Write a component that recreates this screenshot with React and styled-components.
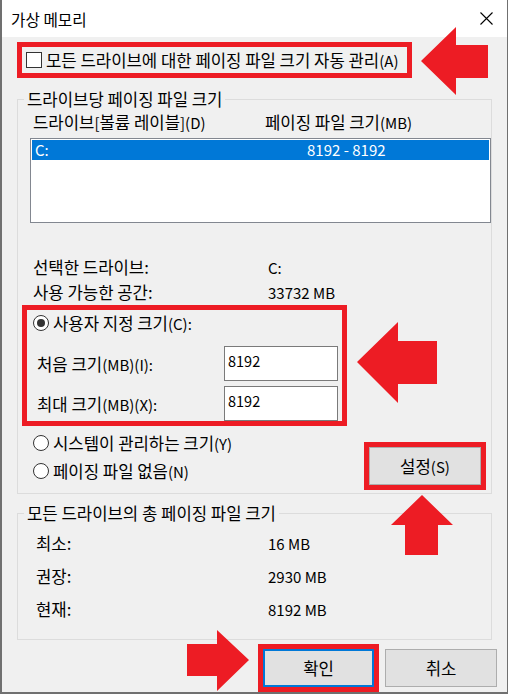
import React from "react";
import styled, { createGlobalStyle } from "styled-components";

const GlobalStyle = createGlobalStyle`
  html, body { margin: 0; padding: 0; background: #ffffff; }
  body {
    font-family: "Noto Sans CJK KR", "Noto Sans", sans-serif;
    font-size: 16.7px;
    color: #000;
  }
  * { box-sizing: border-box; }
`;

const RED = "#ed1c24";

const Window = styled.div`
  position: relative;
  width: 508px;
  height: 694px;
  background: #f0f0f0;
  border-left: 2px solid #707070;
  border-right: 1px solid #707070;
  border-bottom: 2px solid #707070;
  display: flex;
  flex-direction: column;
  overflow: hidden;
`;

const TitleBar = styled.div`
  height: 37px;
  flex: none;
  background: #fff;
  display: flex;
  align-items: center;
  justify-content: space-between;
  padding: 0 14px 0 9px;
`;

const Title = styled.span`
  font-size: 15.7px;
  line-height: 20px;
  margin-top: 2px;
`;

const CloseIcon = styled.svg`
  width: 13px;
  height: 13px;
  display: block;
`;

/* Latin / digit runs: Malgun Gothic draws these smaller than Hangul */
const Alt = styled.span`
  font-size: 15px;
`;

const Highlight = styled.div`
  border: 5px solid ${RED};
  flex: none;
`;

const AutoManage = styled(Highlight)`
  margin: 5px 0 0 15px;
  width: 395px;
  height: 36px;
  display: flex;
  align-items: center;
  gap: 4px;
  padding-left: 4px;
  line-height: 20px;
  white-space: nowrap;
`;

const Checkbox = styled.span`
  width: 16px;
  height: 16px;
  flex: none;
  background: #fff;
  border: 1px solid #333;
`;

const Group = styled.fieldset`
  margin: ${(p) => p.$mt}px 15px 0 15px;
  padding: 5px 0 ${(p) => p.$pb}px 0;
  border: 1px solid #dcdcdc;
  min-width: 0;
  flex: none;
`;

const Legend = styled.legend`
  margin-left: 6px;
  padding: 0 3px;
  line-height: 18px;
`;

const ColumnHeader = styled.div`
  display: grid;
  grid-template-columns: 232px 1fr;
  padding-left: 15px;
  height: 20px;
  line-height: 18px;
  white-space: nowrap;
`;

const ListBox = styled.div`
  margin: 5px 0 0 12px;
  height: 85px;
  background: #fff;
  border: 1px solid #828790;
  padding: 1px;
`;

const ListRow = styled.div`
  display: grid;
  grid-template-columns: 272px 1fr;
  height: 20px;
  line-height: 20px;
  padding-left: 3px;
  font-size: 15px;
  background: ${(p) => (p.$selected ? "#0078d7" : "transparent")};
  color: ${(p) => (p.$selected ? "#fff" : "#000")};
`;

const InfoList = styled.div`
  margin-top: 32px;
`;

const InfoRow = styled.div`
  display: grid;
  grid-template-columns: 235px 1fr;
  padding-left: 15px;
  height: 25px;
  line-height: 25px;
`;

const Value = styled.span`
  font-size: 15px;
`;

const CustomSize = styled(Highlight)`
  margin-left: 4px;
  width: 325px;
  height: 121px;
  display: flex;
  flex-direction: column;
`;

const RadioOption = styled.div`
  display: flex;
  align-items: center;
  gap: 4px;
  height: ${(p) => p.$h}px;
  padding-left: ${(p) => p.$indent}px;
  line-height: 20px;
  white-space: nowrap;
`;

const Radio = styled.span`
  width: 16px;
  height: 16px;
  flex: none;
  border-radius: 50%;
  background: #fff;
  border: 1px solid #333;
  display: flex;
  align-items: center;
  justify-content: center;
  &::after {
    content: "";
    display: ${(p) => (p.$checked ? "block" : "none")};
    width: 8px;
    height: 8px;
    border-radius: 50%;
    background: #333;
  }
`;

const FieldRow = styled.div`
  display: grid;
  grid-template-columns: 187px 114px;
  align-items: center;
  padding-left: 10px;
  height: 35px;
  margin-top: ${(p) => p.$mt}px;
  white-space: nowrap;
`;

const TextBox = styled.input`
  font: inherit;
  font-size: 14.5px;
  color: #000;
  width: 114px;
  height: 35px;
  border: 1px solid #7a7a7a;
  background: #fff;
  padding: 2px 3px 8px 3px;
  margin: 0;
  outline: none;
`;

const BottomRow = styled.div`
  display: flex;
  justify-content: space-between;
  align-items: flex-end;
  height: 64px;
`;

const RadioGroup = styled.div`
  display: flex;
  flex-direction: column;
  margin-bottom: 5px;
`;

const SetHighlight = styled(Highlight)`
  width: 122px;
  height: 48px;
  margin-right: 5px;
`;

const Button = styled.button`
  font: inherit;
  color: #000;
  width: ${(p) => p.$w}px;
  height: 38px;
  margin: 0;
  margin-top: ${(p) => p.$mt || 0}px;
  padding: 0;
  background: #e1e1e1;
  border: ${(p) => (p.$default ? "2px solid #0078d7" : "1px solid #adadad")};
  display: flex;
  align-items: center;
  justify-content: center;
  flex: none;
  white-space: nowrap;
`;

const StatRow = styled.div`
  display: grid;
  grid-template-columns: 232px 1fr;
  padding-left: 18px;
  height: 33px;
  line-height: 33px;
`;

const Footer = styled.div`
  display: flex;
  justify-content: flex-end;
  align-items: flex-start;
  gap: 6px;
  padding-right: 10px;
  margin-top: 4px;
`;

const OkHighlight = styled(Highlight)`
  width: 121px;
  height: 48px;
`;

const Overlay = styled.svg`
  position: absolute;
  left: -2px;
  top: 0;
  width: 508px;
  height: 694px;
  pointer-events: none;
`;

export default function App() {
  return (
    <>
      <GlobalStyle />
      <Window>
        <TitleBar>
          <Title>가상 메모리</Title>
          <CloseIcon viewBox="0 0 13 13">
            <path d="M0.5 0.5 L12.5 12.5 M12.5 0.5 L0.5 12.5" stroke="#000" strokeWidth="1.1" fill="none" />
          </CloseIcon>
        </TitleBar>

        <AutoManage>
          <Checkbox />
          <span>
            모든 드라이브에 대한 페이징 파일 크기 자동 관리<Alt>(A)</Alt>
          </span>
        </AutoManage>

        <Group $mt={12} $pb={3}>
          <Legend>드라이브당 페이징 파일 크기</Legend>
          <ColumnHeader>
            <span>
              드라이브<Alt>[</Alt>볼륨 레이블<Alt>](D)</Alt>
            </span>
            <span>
              페이징 파일 크기<Alt>(MB)</Alt>
            </span>
          </ColumnHeader>
          <ListBox>
            <ListRow $selected>
              <span>C:</span>
              <span>8192 - 8192</span>
            </ListRow>
          </ListBox>
          <InfoList>
            <InfoRow>
              <span>선택한 드라이브:</span>
              <Value>C:</Value>
            </InfoRow>
            <InfoRow>
              <span>사용 가능한 공간:</span>
              <Value>33732 MB</Value>
            </InfoRow>
          </InfoList>
          <CustomSize>
            <RadioOption $h={26} $indent={6}>
              <Radio $checked />
              <span>
                사용자 지정 크기<Alt>(C):</Alt>
              </span>
            </RadioOption>
            <FieldRow $mt={10}>
              <span>
                처음 크기<Alt>(MB)(I):</Alt>
              </span>
              <TextBox readOnly value="8192" />
            </FieldRow>
            <FieldRow $mt={5}>
              <span>
                최대 크기<Alt>(MB)(X):</Alt>
              </span>
              <TextBox readOnly value="8192" />
            </FieldRow>
          </CustomSize>
          <BottomRow>
            <RadioGroup>
              <RadioOption $h={28} $indent={15}>
                <Radio />
                <span>
                  시스템이 관리하는 크기<Alt>(Y)</Alt>
                </span>
              </RadioOption>
              <RadioOption $h={28} $indent={15}>
                <Radio />
                <span>
                  페이징 파일 없음<Alt>(N)</Alt>
                </span>
              </RadioOption>
            </RadioGroup>
            <SetHighlight>
              <Button $w={112}>
                설정<Alt>(S)</Alt>
              </Button>
            </SetHighlight>
          </BottomRow>
        </Group>

        <Group $mt={10} $pb={13}>
          <Legend>모든 드라이브의 총 페이징 파일 크기</Legend>
          <StatRow>
            <span>최소:</span>
            <Value>16 MB</Value>
          </StatRow>
          <StatRow>
            <span>권장:</span>
            <Value>2930 MB</Value>
          </StatRow>
          <StatRow>
            <span>현재:</span>
            <Value>8192 MB</Value>
          </StatRow>
        </Group>

        <Footer>
          <OkHighlight>
            <Button $w={111} $default>확인</Button>
          </OkHighlight>
          <Button $w={112} $mt={5}>취소</Button>
        </Footer>

        <Overlay viewBox="0 0 508 694">
          <polygon fill={RED} points="421,61 456,27 456,45 488,45 488,78 456,78 456,95" />
          <polygon fill={RED} points="357,362 398,322 398,341 437,341 437,384 398,384 398,403" />
          <polygon fill={RED} points="422,495 453,525 438,525 438,555 405,555 405,525 391,525" />
          <polygon fill={RED} points="249,660 217,630 217,644 187,644 187,676 217,676 217,691" />
        </Overlay>
      </Window>
    </>
  );
}
